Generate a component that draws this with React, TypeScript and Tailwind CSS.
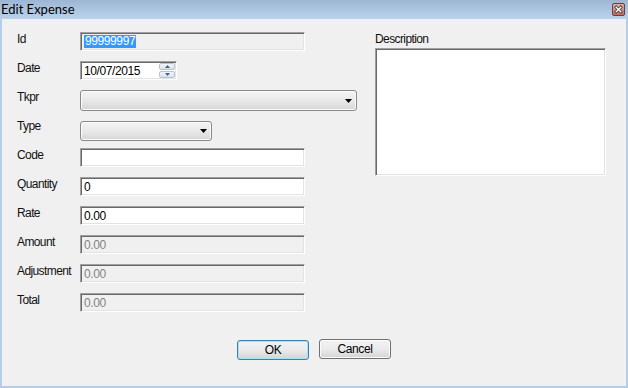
import React from "react";

const inputBase =
  "h-[19px] border border-t-[#a0a0a0] border-l-[#a0a0a0] border-r-[#ffffff] border-b-[#ffffff] shadow-[inset_1px_1px_0_#696969,inset_-1px_-1px_0_#e3e3e3] flex items-center pl-[3px] text-[12px] leading-[14px] tracking-[-0.4px]";

function Label({ children }: { children: React.ReactNode }) {
  return (
    <div className="w-[63px] text-[12px] leading-[14px] tracking-[-0.6px] text-[#111]">
      {children}
    </div>
  );
}

function TextBox({ value, disabled, w = "w-[225px]" }: { value?: string; disabled?: boolean; w?: string }) {
  return (
    <div className={`${inputBase} ${w} ${disabled ? "bg-[#f0f0f0] text-[#838383]" : "bg-white text-black"}`}>
      {value}
    </div>
  );
}

function Combo({ w, h }: { w: string; h: string }) {
  return (
    <div className={`${w} ${h} rounded-[3px] border border-[#8a8a8a] bg-linear-to-b from-[#f4f4f4] via-[#e9e9e9] to-[#d6d6d6] shadow-[inset_0_0_0_1px_#fbfbfb] flex items-center justify-end pr-[4px]`}>
      <svg width="7" height="4" viewBox="0 0 7 4">
        <path d="M0 0 H7 L3.5 4 Z" fill="#000" />
      </svg>
    </div>
  );
}

function Row({ label, children }: { label: string; children: React.ReactNode }) {
  return (
    <div className="flex items-start h-[29px]">
      <Label>{label}</Label>
      {children}
    </div>
  );
}

function SpinBtn({ up }: { up?: boolean }) {
  return (
    <div className="h-[7px] rounded-[2px] border border-[#b7c3d4] bg-linear-to-b from-[#f1f5fb] to-[#d8e1ed] flex items-center justify-center">
      <svg width="5" height="3" viewBox="0 0 5 3">
        <path d={up ? "M0 3 H5 L2.5 0 Z" : "M0 0 H5 L2.5 3 Z"} fill="#4a5f80" />
      </svg>
    </div>
  );
}

export default function App() {
  return (
    <div className="w-[628px] h-[388px] flex flex-col bg-[#b4cde8] overflow-hidden font-['Liberation_Sans',Arial,sans-serif]">
      {/* Title bar */}
      <div className="h-[19px] shrink-0 flex items-center justify-between pl-[1px] pr-[3px] bg-linear-to-b from-[#9db6d3] to-[#bad2ec]">
        <span className="font-['Lato',sans-serif] text-[13px] leading-[15px] text-black">Edit Expense</span>
        <svg width="13" height="13" viewBox="0 0 13 13" className="mt-[-1px]">
          <defs>
            <linearGradient id="cg" x1="0" y1="0" x2="0" y2="1">
              <stop offset="0" stopColor="#e8b0a6" />
              <stop offset="1" stopColor="#c8675a" />
            </linearGradient>
          </defs>
          <rect x="0.5" y="0.5" width="12" height="12" rx="1.5" fill="url(#cg)" stroke="#5b4442" />
          <path d="M4.2 4.2 L8.8 8.8 M8.8 4.2 L4.2 8.8" stroke="#3a3a3a" strokeWidth="3" strokeLinecap="square" />
          <path d="M4.2 4.2 L8.8 8.8 M8.8 4.2 L4.2 8.8" stroke="#ffffff" strokeWidth="1.4" strokeLinecap="square" />
        </svg>
      </div>

      {/* Client area */}
      <div className="flex-1 mx-[2px] mb-[2px] bg-[#f0f0f0] flex flex-col">
        <div className="flex pl-[15px] pt-[13px]">
          <div className="w-[341px] flex flex-col">
            <Row label="Id">
              <div className={`${inputBase} w-[225px] bg-[#f0f0f0] pl-[2px]`}>
                <span className="bg-[#3399ff] text-white px-[1px] leading-[13px]">99999997</span>
              </div>
            </Row>
            <Row label="Date">
              <div className={`${inputBase} w-[97px] bg-white text-black pr-[1px]`}>
                <span className="flex-1">10/07/2015</span>
                <div className="flex flex-col gap-[1px] w-[16px]">
                  <SpinBtn up />
                  <SpinBtn />
                </div>
              </div>
            </Row>
            <Row label="Tkpr">
              <Combo w="w-[277px]" h="h-[21px]" />
            </Row>
            <Row label="Type">
              <div className="mt-[2px]">
                <Combo w="w-[132px]" h="h-[20px]" />
              </div>
            </Row>
            <Row label="Code">
              <TextBox value="" />
            </Row>
            <Row label="Quantity">
              <TextBox value="0" />
            </Row>
            <Row label="Rate">
              <TextBox value="0.00" />
            </Row>
            <Row label="Amount">
              <TextBox value="0.00" disabled />
            </Row>
            <Row label="Adjustment">
              <TextBox value="0.00" disabled />
            </Row>
            <Row label="Total">
              <TextBox value="0.00" disabled />
            </Row>
          </div>
          <div className="ml-[17px] w-[231px] flex flex-col">
            <div className="text-[12px] leading-[14px] tracking-[-0.6px] text-[#111]">Description</div>
            <div className="mt-[2px] h-[128px] bg-white border border-t-[#a0a0a0] border-l-[#a0a0a0] border-r-[#ffffff] border-b-[#ffffff] shadow-[inset_1px_1px_0_#696969,inset_-1px_-1px_0_#e3e3e3]" />
          </div>
        </div>

        <div className="flex justify-center items-start gap-[10px] mt-[17px]">
          <button className="mt-[1px] w-[72px] h-[20px] rounded-[3px] border border-[#3c7fb1] shadow-[inset_0_0_0_1px_#a8e0f7] bg-linear-to-b from-[#f2f2f2] via-[#ebebeb] to-[#d4d4d4] text-[12px] leading-[14px] tracking-[-0.4px] text-black">
            OK
          </button>
          <button className="w-[72px] h-[20px] rounded-[3px] border border-[#707070] shadow-[inset_0_0_0_1px_#fbfbfb] bg-linear-to-b from-[#f2f2f2] via-[#ebebeb] to-[#d4d4d4] text-[12px] leading-[14px] tracking-[-0.4px] text-black">
            Cancel
          </button>
        </div>
      </div>
    </div>
  );
}
